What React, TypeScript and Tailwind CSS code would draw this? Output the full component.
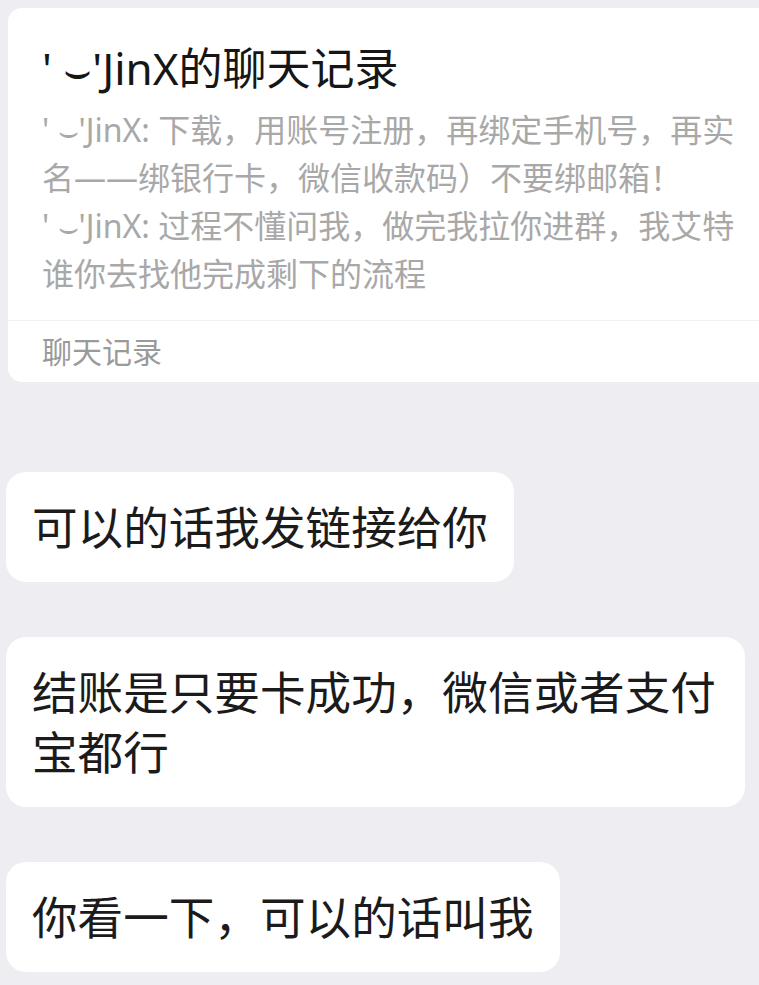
const cjk = { fontFamily: '"Noto Sans", "Noto Sans CJK SC", sans-serif' }

const name = "' \u2323'JinX"

const bubbles = [
  "可以的话我发链接给你",
  "结账是只要卡成功，微信或者支付宝都行",
  "你看一下，可以的话叫我",
]

export default function App() {
  return (
    <div className="w-[759px] h-[985px] overflow-hidden bg-[#ededf2]" style={cjk}>
      {/* Forwarded chat record card */}
      <div className="ml-2 mt-2 w-[780px] rounded-[14px] bg-white">
        <div className="pl-[34px] pr-[46px] pt-[32px] pb-[22px]">
          <div className="text-[44px] leading-[56px] text-[#161616] whitespace-nowrap">{name}的聊天记录</div>
          <div className="mt-[10px] w-[702px] text-[32px] leading-[48px] text-[#a8a8a8]">
            <p>{name}: 下载，用账号注册，再绑定手机号，再实名——绑银行卡，微信收款码）不要绑邮箱！</p>
            <p>{name}: 过程不懂问我，做完我拉你进群，我艾特谁你去找他完成剩下的流程</p>
          </div>
        </div>
        <div className="border-t border-[#f1f1f3] pl-[34px] h-[62px] flex items-center text-[30px] text-[#9a9a9a]">
          聊天记录
        </div>
      </div>

      {/* Messages */}
      <div className="mt-[90px] pl-[6px] flex flex-col items-start gap-[55px]">
        {bubbles.map((t) => (
          <div
            key={t}
            className="max-w-[739px] rounded-[20px] bg-white px-[26px] py-[25px] text-[45.6px] leading-[60px] text-[#1b1b1b]"
          >
            {t}
          </div>
        ))}
      </div>
    </div>
  )
}
